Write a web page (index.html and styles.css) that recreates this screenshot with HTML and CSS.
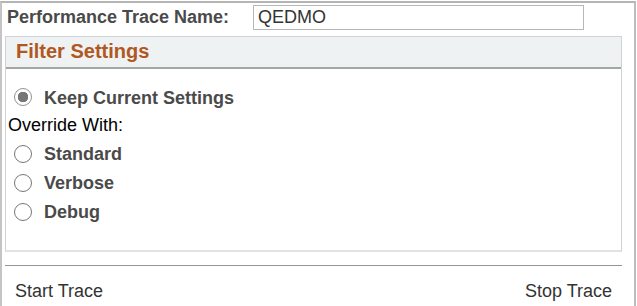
FILE: index.html
```html
<!DOCTYPE html>
<html lang="en">

<head>
    <meta charset="UTF-8">
    <title>Performance Trace</title>
    <link rel="stylesheet" href="styles.css">
</head>

<body>
    <div class="page">
        <div class="name-row">
            <label for="trace_name">Performance Trace Name:</label>
            <input type="text" id="trace_name" value="QEDMO">
        </div>

        <!-- Filter box -->
        <div class="filter-box">
            <div class="filter-header">Filter Settings</div>
            <div class="filter-body">
                <div class="radio-row keep-row">
                    <input type="radio" name="filter" id="keep" checked>
                    <label for="keep">Keep Current Settings</label>
                </div>
                <p class="override">Override With:</p>
                <div class="radio-row">
                    <input type="radio" name="filter" id="standard">
                    <label for="standard">Standard</label>
                </div>
                <div class="radio-row">
                    <input type="radio" name="filter" id="verbose">
                    <label for="verbose">Verbose</label>
                </div>
                <div class="radio-row">
                    <input type="radio" name="filter" id="debug">
                    <label for="debug">Debug</label>
                </div>
            </div>
        </div>

        <div class="actions">
            <a href="#">Start Trace</a>
            <a href="#">Stop Trace</a>
        </div>
    </div>
</body>

</html>
```

FILE: styles.css
```css
body, p {
    margin: 0;
    padding: 0;
}

body {
    font-family: 'Liberation Sans', Arial, sans-serif;
    font-size: 18px;
    color: #333;
    background-color: #fff;
    width: 637px;
    height: 306px;
    overflow: hidden;
    padding-top: 1px;
    box-sizing: border-box;
}

.page {
    height: 305px;
    width: 636px;
    border-top: 2px solid #b5b5b5;
    border-left: 2px solid #c4c4c4;
    border-right: 2px solid #bdbdbd;
    box-sizing: border-box;
    padding: 0 0 0 3px;
}

.name-row {
    display: flex;
    align-items: center;
    height: 28px;
    padding-left: 2px;
}

.name-row label {
    font-weight: bold;
    color: #4a4a4a;
    width: 246px;
}

.name-row input {
    width: 331px;
    height: 25px;
    box-sizing: border-box;
    border: 1px solid #b7b7b7;
    padding: 1px 4px 0;
    font-family: inherit;
    font-size: 18px;
    color: #333;
    outline: none;
}

.filter-box {
    margin-top: 5px;
    width: 617px;
    height: 216px;
    box-sizing: border-box;
    border: 1px solid #cfd3d5;
    border-bottom: 2px solid #e2e2e2;
}

.filter-header {
    background-color: #eff2f3;
    border-bottom: 2px solid #a5a5a5;
    height: 32px;
    box-sizing: border-box;
    padding: 3px 0 0 10px;
    font-size: 20px;
    font-weight: bold;
    color: #b0581f;
}

.filter-body {
    padding-top: 14px;
}

.radio-row {
    display: flex;
    align-items: center;
    height: 29px;
    padding-left: 8px;
}

.keep-row {
    height: 28px;
}

.radio-row input {
    appearance: none;
    margin: 0 12px 0 0;
    width: 18px;
    height: 18px;
    border: 1.6px solid #777;
    border-radius: 50%;
    box-sizing: border-box;
    background-color: #fff;
}

.radio-row input:checked {
    border-color: #939393;
    background: radial-gradient(circle, #777 0 5px, #fff 5.5px);
}

.radio-row label {
    font-weight: bold;
    color: #4a4a4a;
    margin-top: 2px;
}

.override {
    color: #000;
    height: 28px;
    line-height: 28px;
    margin-left: 2px;
}

.actions {
    margin-top: 13px;
    width: 617px;
    border-top: 1px solid #959595;
    display: flex;
    justify-content: space-between;
    padding: 15px 10px 0 10px;
    box-sizing: border-box;
}

.actions a {
    color: #333;
    text-decoration: none;
}
```
